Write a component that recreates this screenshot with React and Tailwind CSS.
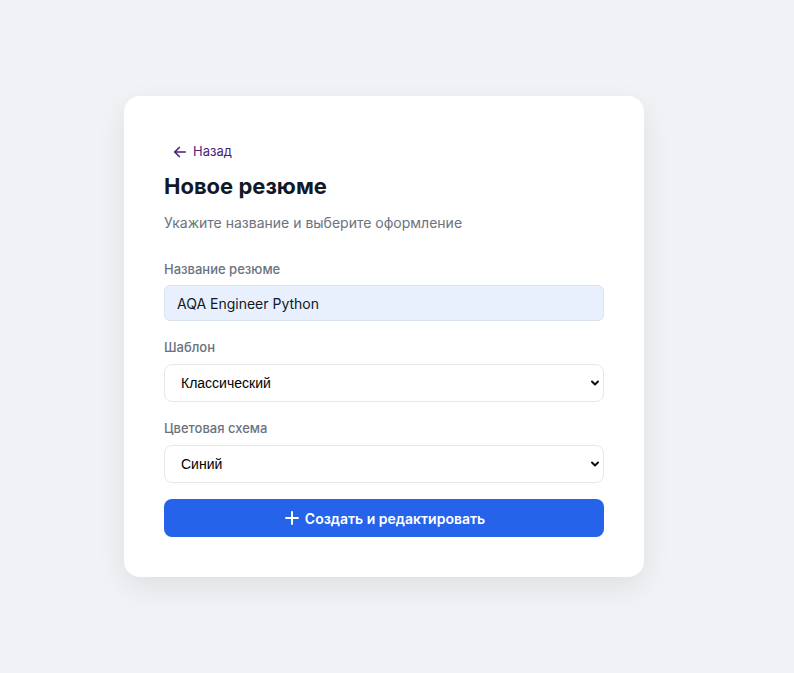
import React from "react";

function ArrowLeft() {
  return (
    <svg width="18" height="18" viewBox="0 0 24 24" fill="none" stroke="currentColor" strokeWidth="2.2" strokeLinecap="round" strokeLinejoin="round">
      <path d="M19 12H5" />
      <path d="M11 18l-6-6 6-6" />
    </svg>
  );
}

function Plus() {
  return (
    <svg width="18" height="18" viewBox="0 0 24 24" fill="none" stroke="currentColor" strokeWidth="2.6" strokeLinecap="round">
      <path d="M12 4v16" />
      <path d="M4 12h16" />
    </svg>
  );
}

function Chevron() {
  return (
    <svg className="absolute right-[4px] top-[14px] pointer-events-none" width="10" height="10" viewBox="0 0 10 10" fill="none" stroke="#111" strokeWidth="2" strokeLinecap="round" strokeLinejoin="round">
      <path d="M2 3.5l3 3 3-3" />
    </svg>
  );
}

export default function App() {
  return (
    <div className="min-h-[673px] w-full bg-[#f0f2f5] flex justify-start pl-[124px] pt-[96px]" style={{ fontFamily: "Inter, 'Noto Sans', sans-serif" }}>
      <div className="w-[520px] h-fit bg-white rounded-2xl p-10 shadow-[0_10px_30px_rgba(0,0,0,0.08)]">
        <a href="#" className="inline-flex items-center gap-1 h-8 pl-[7px] pr-2 text-[13px] text-[#4a1d7a] no-underline">
          <ArrowLeft />
          <span>Назад</span>
        </a>
        <h1 className="mt-[2px] text-[22px] leading-8 font-bold text-[#111827]">Новое резюме</h1>
        <p className="mt-[10px] text-[14px] leading-[22px] text-[#6b7280]">Укажите название и выберите оформление</p>

        <div className="mt-[25px] flex flex-col">
          <label className="text-[13px] leading-5 text-[#6b7280] font-medium">Название резюме</label>
          <input
            readOnly
            value="AQA Engineer Python"
            className="mt-[6px] h-9 w-full rounded-md border border-[#dbe3ee] bg-[#e8f0fe] px-3 text-[14px] text-[#111827] outline-none"
            style={{ fontFamily: "Inter, sans-serif" }}
          />
        </div>

        <div className="mt-4 flex flex-col">
          <label className="text-[13px] leading-5 text-[#6b7280] font-medium">Шаблон</label>
          <div className="mt-[7px] relative">
            <select
              className="h-[38px] w-full appearance-none rounded-lg border border-[#e5e7eb] bg-white pl-4 pr-8 text-[14px] text-black outline-none"
              style={{ fontFamily: "'Liberation Sans', Arial, sans-serif" }}
              defaultValue="classic"
            >
              <option value="classic">Классический</option>
            </select>
            <Chevron />
          </div>
        </div>

        <div className="mt-4 flex flex-col">
          <label className="text-[13px] leading-5 text-[#6b7280] font-medium">Цветовая схема</label>
          <div className="mt-[7px] relative">
            <select
              className="h-[38px] w-full appearance-none rounded-lg border border-[#e5e7eb] bg-white pl-4 pr-8 text-[14px] text-black outline-none"
              style={{ fontFamily: "'Liberation Sans', Arial, sans-serif" }}
              defaultValue="blue"
            >
              <option value="blue">Синий</option>
            </select>
            <Chevron />
          </div>
        </div>

        <button className="mt-4 h-[38px] w-full rounded-lg bg-[#2563eb] text-white text-[14px] font-semibold flex items-center justify-center gap-1">
          <Plus />
          <span>Создать и редактировать</span>
        </button>
      </div>
    </div>
  );
}
